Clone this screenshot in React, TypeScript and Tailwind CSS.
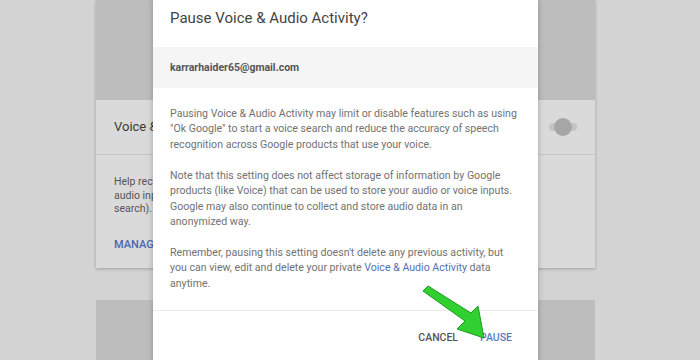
import React from "react";

function GreenArrow() {
    return (
        <svg
            className="absolute left-[415px] top-[280px]"
            width="80"
            height="65"
            viewBox="0 0 80 65"
        >
            <polygon
                points="8,11 13,6 56,33 63,26 69,58 42,49 50,41"
                fill="#2fd02f"
                stroke="#1e9a1e"
                strokeWidth="1"
                strokeLinejoin="round"
            />
        </svg>
    );
}

function Toggle() {
    return (
        <div className="relative w-[28px] h-[18px] flex items-center">
            <div className="w-[28px] h-[8px] rounded-full bg-[#c4c4c4]" />
            <div className="absolute left-[5px] top-0 w-[18px] h-[18px] rounded-full bg-[#a6a6a6]" />
        </div>
    );
}

export default function App() {
    return (
        <div
            className="relative w-[700px] h-[360px] overflow-hidden bg-[#d3d3d3]"
            style={{ fontFamily: "Roboto, 'Liberation Sans', sans-serif" }}
        >
            {/* page behind the dialog (only the part left of the dialog shows) */}
            <div className="flex flex-col pl-[96px]">
                <div className="w-[499px] h-[268px] flex flex-col bg-[#dadada] shadow-[0_1px_3px_rgba(0,0,0,0.25)]">
                    <div className="h-[100px] bg-[#bdbdbd]" />
                    <div className="h-[55px] flex items-center justify-between pl-[18px] pr-[18px] border-b border-[#c6c6c6]">
                        <span className="w-[39px] overflow-hidden whitespace-nowrap text-[13px] text-[#3a3a3a]">
                            Voice &amp; Audio Activity
                        </span>
                        <Toggle />
                    </div>
                    <div className="pl-[18px] pt-[20px] w-[57px] overflow-hidden flex flex-col">
                        <p className="text-[10.5px] leading-[13.5px] text-[#555] whitespace-nowrap">
                            Help recognize your voice and improve speech recognition by storing
                            <br />
                            audio inputs to your account (for example, when you say "Ok Google" to do a voice
                            <br />
                            search).
                        </p>
                        <span className="mt-[21px] whitespace-nowrap text-[11px] font-medium text-[#4a67b0]">
                            MANAGE ACTIVITY
                        </span>
                    </div>
                </div>
                <div className="mt-[32px] w-[499px] h-[80px] bg-[#bdbdbd]" />
            </div>

            {/* dialog */}
            <div className="absolute left-[153px] top-0 w-[385px] h-[380px] bg-white shadow-[0_0_6px_rgba(0,0,0,0.25)] flex flex-col">
                <h2 className="pt-[8px] pl-[17px] text-[15px] leading-[20px] text-[#444]">
                    Pause Voice &amp; Audio Activity?
                </h2>
                <div className="mt-[19px] h-[41px] bg-[#f5f5f5] flex items-center pl-[17px]">
                    <span className="text-[10.5px] font-bold text-[#555]">karrarhaider65@gmail.com</span>
                </div>
                <div className="pl-[17px] pr-[20px] pt-[18px] flex flex-col gap-[15.5px] text-[10.6px] leading-[15.4px] text-[#727272]">
                    <p>
                        Pausing Voice &amp; Audio Activity may limit or disable features such as using
                        "Ok Google" to start a voice search and reduce the accuracy of speech
                        recognition across Google products that use your voice.
                    </p>
                    <p>
                        Note that this setting does not affect storage of information by Google
                        products (like Voice) that can be used to store your audio or voice inputs.
                        Google may also continue to collect and store audio data in an
                        anonymized way.
                    </p>
                    <p>
                        Remember, pausing this setting doesn't delete any previous activity, but
                        you can view, edit and delete your private{" "}
                        <span className="text-[#5470b5]">Voice &amp; Audio Activity</span> data
                        anytime.
                    </p>
                </div>
                <div className="mt-[19px] border-t border-[#ececec] h-[54px] flex items-center justify-end gap-[22px] pr-[26px]">
                    <span className="text-[10.5px] font-medium text-[#555]">CANCEL</span>
                    <span className="text-[10.5px] font-medium text-[#5a7cc4]">PAUSE</span>
                </div>
            </div>

            <GreenArrow />
        </div>
    );
}
